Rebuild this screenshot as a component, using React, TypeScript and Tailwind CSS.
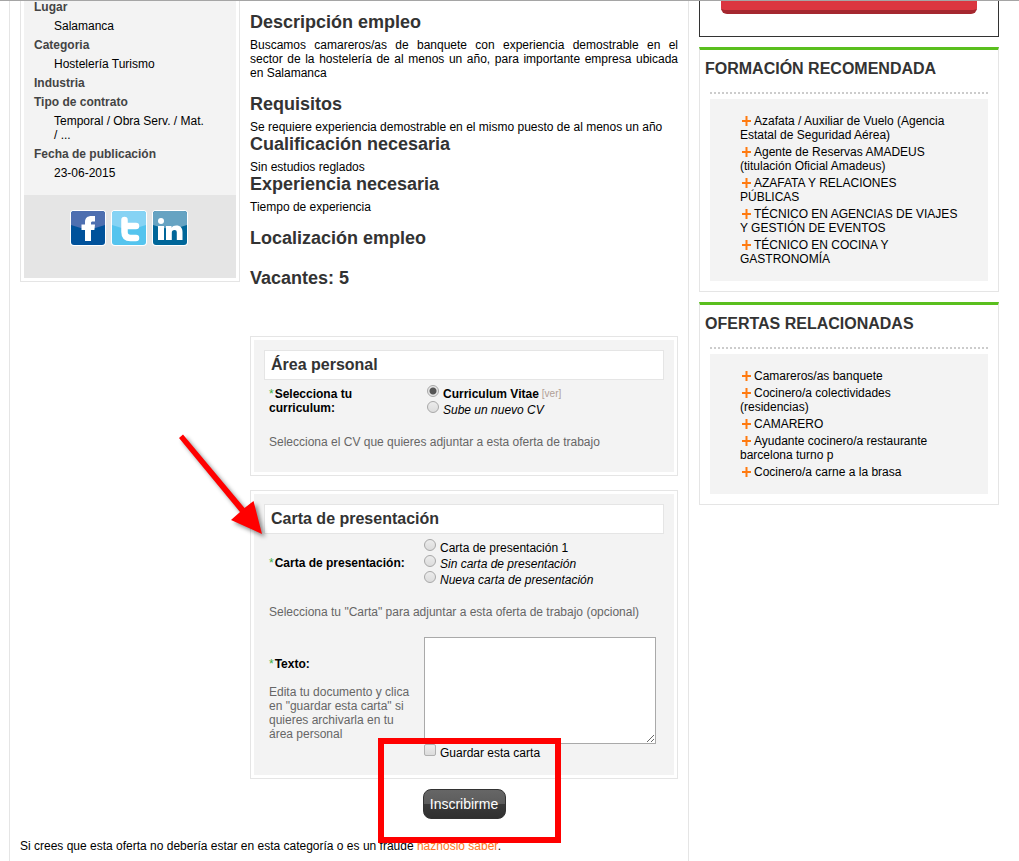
import type { ReactNode } from "react";

const details = [
  { label: "Lugar", value: "Salamanca" },
  { label: "Categoria", value: "Hostelería Turismo" },
  { label: "Industria", value: "" },
  { label: "Tipo de contrato", value: "Temporal / Obra Serv. / Mat. / ..." },
  { label: "Fecha de publicación", value: "23-06-2015" },
];

const courses = [
  "Azafata / Auxiliar de Vuelo (Agencia Estatal de Seguridad Aérea)",
  "Agente de Reservas AMADEUS (titulación Oficial Amadeus)",
  "AZAFATA Y RELACIONES PÚBLICAS",
  "TÉCNICO EN AGENCIAS DE VIAJES Y GESTIÓN DE EVENTOS",
  "TÉCNICO EN COCINA Y GASTRONOMÍA",
];

const relatedOffers = [
  "Camareros/as banquete",
  "Cocinero/a colectividades (residencias)",
  "CAMARERO",
  "Ayudante cocinero/a restaurante barcelona turno p",
  "Cocinero/a carne a la brasa",
];

function FacebookIcon() {
  return (
    <svg width="36" height="36" viewBox="0 0 36 36" aria-hidden="true">
      <rect width="36" height="36" rx="4" fill="#fff" />
      <rect x="1" y="1" width="34" height="34" rx="3" fill="#00529b" />
      <path d="M4 1h28a3 3 0 0 1 3 3v11Q18 22 1 15V4a3 3 0 0 1 3-3z" fill="#4e6fb0" />
      <path
        d="M15 31V20h-3.500v-5.500H15V12c0-4 2.500-6 6.500-6H25v5.500h-2.200c-1.300 0-1.800.5-1.800 1.500v1.500h4l-.6 5.500H21v11z"
        fill="#fff"
      />
    </svg>
  );
}

function TwitterIcon() {
  return (
    <svg width="36" height="36" viewBox="0 0 36 36" aria-hidden="true">
      <rect width="36" height="36" rx="4" fill="#fff" />
      <rect x="1" y="1" width="34" height="34" rx="3" fill="#55c4ee" />
      <path d="M4 1h28a3 3 0 0 1 3 3v11Q18 22 1 15V4a3 3 0 0 1 3-3z" fill="#86d3f4" />
      <path
        d="M13.500 10v12c0 4 2 6 6 6H25M13.500 16H25"
        fill="none"
        stroke="#fff"
        strokeWidth="6.500"
        strokeLinecap="round"
      />
    </svg>
  );
}

function LinkedinIcon() {
  return (
    <svg width="36" height="36" viewBox="0 0 36 36" aria-hidden="true">
      <rect width="36" height="36" rx="4" fill="#fff" />
      <rect x="1" y="1" width="34" height="34" rx="3" fill="#006699" />
      <path d="M4 1h28a3 3 0 0 1 3 3v11Q18 22 1 15V4a3 3 0 0 1 3-3z" fill="#66a3c2" />
      <circle cx="9" cy="11" r="3" fill="#fff" />
      <path
        d="M6 16h6v14H6zM14 16h5.500v1.800c1-1.500 2.600-2.300 4.800-2.300 4.200 0 6.200 2.500 6.200 6.500v8h-5.700v-7.500c0-1.700-.7-2.500-2.300-2.500-1.800 0-2.700 1-2.700 2.700V30H14z"
        fill="#fff"
      />
    </svg>
  );
}

function PlusIcon() {
  return (
    <svg className="ml-[2px] mr-[3px] inline-block align-[-1px]" width="9" height="10" viewBox="0 0 9 10" aria-hidden="true">
      <path d="M0 4h9v2H0zM3.500 0h2v10h-2z" fill="#ff7a0f" />
    </svg>
  );
}

function Heading({ children }: { children: ReactNode }) {
  return <h2 className="text-lg leading-5 font-bold text-[#333]">{children}</h2>;
}

function LinkCard({ title, items }: { title: string; items: string[] }) {
  return (
    <section className="border border-t-3 border-[#e5e5e5] border-t-[#5abf1e] px-[10px] pb-[10px]">
      <h2 className="-ml-[5px] pt-[9px] text-base leading-5 font-bold text-[#333]">{title}</h2>
      <div className="mt-[13px] mb-[5px] border-t-2 border-dotted border-[#ccc]" />
      <ul className="flex flex-col gap-[3px] bg-[#f3f3f3] px-[30px] py-[15px]">
        {items.map((item) => (
          <li key={item}>
            <PlusIcon />
            <a href="#">{item}</a>
          </li>
        ))}
      </ul>
    </section>
  );
}

function Panel({ title, className, children }: { title: string; className: string; children: ReactNode }) {
  return (
    <section className="border border-[#e5e5e5] p-[3px]">
      <div className={`bg-[#f3f3f3] px-[10px] pt-[10px] ${className}`}>
        <h3 className="border border-[#e5e5e5] bg-white px-[6px] py-1 text-base leading-5 font-bold text-[#333]">
          {title}
        </h3>
        <div className="px-[5px] pt-[5px]">{children}</div>
      </div>
    </section>
  );
}

function Required() {
  return <span className="mr-px font-normal text-[#3fae3f]">*</span>;
}

type RadioProps = {
  id: string;
  name: string;
  defaultChecked?: boolean;
  className?: string;
  children: ReactNode;
};

function Radio({ id, name, defaultChecked, className, children }: RadioProps) {
  return (
    <div className="flex h-4 items-end gap-1">
      <input
        id={id}
        type="radio"
        name={name}
        defaultChecked={defaultChecked}
        className="size-3 shrink-0 appearance-none self-start rounded-full border border-[#a8a8a8] bg-linear-to-b from-[#ececec] to-[#dcdcdc] checked:bg-[radial-gradient(circle,#555_0_3px,#e6e6e6_4px)]"
      />
      <label htmlFor={id} className={className}>
        {children}
      </label>
    </div>
  );
}

export default function App() {
  return (
    <div className="relative flex min-h-screen gap-[10px] bg-white pr-5 pl-[9px] font-['Liberation_Sans',Arial,sans-serif] text-xs leading-[14px] text-black">
      <div className="absolute inset-x-0 top-0 z-10 h-px bg-[#a5a5a5]" />

      <main className="min-w-0 flex-1 border-x border-[#e5e5e5] px-[10px]">
        <div className="flex items-start gap-[10px]">
          <aside className="w-[220px] shrink-0 border border-t-0 border-[#e5e5e5] p-[3px] pt-0">
            <dl className="bg-[#f3f3f3] px-[10px] pb-[15px]">
              {details.map((item) => (
                <div key={item.label} className="pb-[5px] last:pb-0">
                  <dt className="font-bold text-[#444]">{item.label}</dt>
                  {item.value && <dd className="mt-[5px] mr-5 ml-5">{item.value}</dd>}
                </div>
              ))}
            </dl>
            <div className="flex justify-center gap-[5px] bg-[#e5e5e5] pt-[15px] pr-[2px] pb-8">
              <a href="#" aria-label="Facebook"><FacebookIcon /></a>
              <a href="#" aria-label="Twitter"><TwitterIcon /></a>
              <a href="#" aria-label="LinkedIn"><LinkedinIcon /></a>
            </div>
          </aside>

          <article className="relative min-w-0 flex-1 pt-3">
            <Heading>Descripción empleo</Heading>
            <p className="mt-[6px] mb-[14px] text-justify">
              Buscamos camareros/as de banquete con experiencia demostrable en el{" "}
              sector&nbsp;de&nbsp;la hostelería de al menos un año, para importante empresa ubicada{" "}
              en&nbsp;Salamanca
            </p>
            <Heading>Requisitos</Heading>
            <p className="mt-[6px]">
              Se requiere experiencia demostrable en el mismo puesto de al menos un año
            </p>
            <Heading>Cualificación necesaria</Heading>
            <p className="mt-[6px]">Sin estudios reglados</p>
            <Heading>Experiencia necesaria</Heading>
            <p className="mt-[6px] mb-[14px]">Tiempo de experiencia</p>
            <Heading>Localización empleo</Heading>
            <div className="mt-5">
              <Heading>Vacantes: 5</Heading>
            </div>

            <form className="mt-12 flex flex-col" onSubmit={(e) => e.preventDefault()}>
              <Panel title="Área personal" className="pb-[23px]">
                <div className="flex items-center gap-[10px]">
                  <div className="w-[145px] shrink-0 font-bold">
                    <Required />
                    Selecciona tu curriculum:
                  </div>
                  <div className="pl-[3px]">
                    <div className="flex gap-[3px]">
                      <Radio id="cv-saved" name="cv" defaultChecked className="font-bold">
                        Curriculum Vitae
                      </Radio>
                      <a href="#" className="pt-[2px] text-[10px] leading-[14px] text-[#b09f96]">
                        [ver]
                      </a>
                    </div>
                    <Radio id="cv-new" name="cv" className="italic">
                      Sube un nuevo CV
                    </Radio>
                  </div>
                </div>
                <p className="mt-[18px] text-[#666]">
                  Selecciona el CV que quieres adjuntar a esta oferta de trabajo
                </p>
              </Panel>

              <div className="mt-[14px]">
                <Panel title="Carta de presentación" className="pb-[15px]">
                  <div className="flex items-center gap-[10px]">
                    <div className="w-[145px] shrink-0 font-bold">
                      <Required />
                      Carta de presentación:
                    </div>
                    <div>
                      <Radio id="letter-1" name="letter">
                        Carta de presentación 1
                      </Radio>
                      <Radio id="letter-none" name="letter" className="italic">
                        Sin carta de presentación
                      </Radio>
                      <Radio id="letter-new" name="letter" className="italic">
                        Nueva carta de presentación
                      </Radio>
                    </div>
                  </div>
                  <p className="mt-[18px] text-[#666]">
                    Selecciona tu "Carta" para adjuntar a esta oferta de trabajo (opcional)
                  </p>
                  <div className="mt-[18px] flex items-center gap-[10px]">
                    <div className="w-[145px] shrink-0">
                      <label htmlFor="letter-text" className="font-bold">
                        <Required />
                        Texto:
                      </label>
                      <p className="mt-[14px] text-[#666]">
                        Edita tu documento y clica en "guardar esta carta" si quieres archivarla en
                        tu área personal
                      </p>
                    </div>
                    <div>
                      <textarea
                        id="letter-text"
                        className="block h-[107px] w-[232px] resize border border-[#a9a9a9] bg-white p-[2px]"
                      />
                      <div className="flex h-4 items-end gap-1">
                        <input
                          id="letter-save"
                          type="checkbox"
                          className="size-3 shrink-0 appearance-none self-start rounded-xs border border-[#b0b0b0] bg-linear-to-b from-[#ececec] to-[#dcdcdc] checked:bg-[#555]"
                        />
                        <label htmlFor="letter-save">Guardar esta carta</label>
                      </div>
                    </div>
                  </div>
                </Panel>
              </div>

              <button
                type="submit"
                className="mt-[10px] h-[30px] w-[83px] self-center rounded-lg border border-[#333] bg-[linear-gradient(#666,#5c5c5c_50%,#3a3a3a_50%,#303030)] text-sm text-white"
              >
                Inscribirme
              </button>
            </form>

            {/* highlight marks over the form */}
            <div className="pointer-events-none absolute -bottom-6 left-32 z-10 h-[105px] w-[183px] border-6 border-[#f00]" />
            <svg
              className="pointer-events-none absolute -left-[80px] top-[426px] z-10 overflow-visible drop-shadow-[3px_3px_2px_rgba(0,0,0,0.45)]"
              width="100"
              height="120"
              viewBox="0 0 100 120"
              aria-hidden="true"
            >
              <path d="M13 8.500 74.500 82 83.500 75 92 108 61 94 70 86 9 12z" fill="#f00" />
            </svg>
          </article>
        </div>

        <p className="mt-5">
          Si crees que esta oferta no debería estar en esta categoría o es un fraude{" "}
          <a href="#" className="text-[#ff7420]">haznoslo saber</a>.
        </p>
      </main>

      <aside className="flex w-[300px] shrink-0 flex-col gap-[10px]">
        <div className="border border-t-0 border-[#333] px-[21px] pb-[22px]">
          <button
            type="button"
            aria-label="Inscribirme"
            className="block h-[14px] w-full rounded-b-md border-b-4 border-[#a5272f] bg-[#db3640]"
          />
        </div>
        <LinkCard title="FORMACIÓN RECOMENDADA" items={courses} />
        <LinkCard title="OFERTAS RELACIONADAS" items={relatedOffers} />
      </aside>
    </div>
  );
}
